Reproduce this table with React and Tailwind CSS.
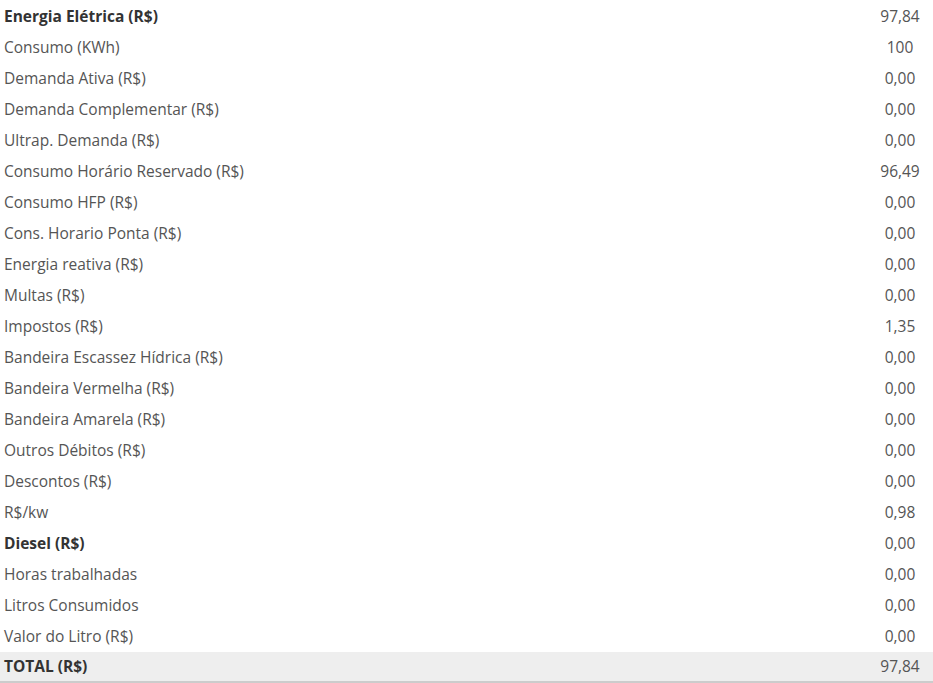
import React from 'react';

const rows = [
  { label: 'Energia Elétrica (R$)', value: '97,84', bold: true },
  { label: 'Consumo (KWh)', value: '100' },
  { label: 'Demanda Ativa (R$)', value: '0,00' },
  { label: 'Demanda Complementar (R$)', value: '0,00' },
  { label: 'Ultrap. Demanda (R$)', value: '0,00' },
  { label: 'Consumo Horário Reservado (R$)', value: '96,49' },
  { label: 'Consumo HFP (R$)', value: '0,00' },
  { label: 'Cons. Horario Ponta (R$)', value: '0,00' },
  { label: 'Energia reativa (R$)', value: '0,00' },
  { label: 'Multas (R$)', value: '0,00' },
  { label: 'Impostos (R$)', value: '1,35' },
  { label: 'Bandeira Escassez Hídrica (R$)', value: '0,00' },
  { label: 'Bandeira Vermelha (R$)', value: '0,00' },
  { label: 'Bandeira Amarela (R$)', value: '0,00' },
  { label: 'Outros Débitos (R$)', value: '0,00' },
  { label: 'Descontos (R$)', value: '0,00' },
  { label: 'R$/kw', value: '0,98' },
  { label: 'Diesel (R$)', value: '0,00', bold: true },
  { label: 'Horas trabalhadas', value: '0,00' },
  { label: 'Litros Consumidos', value: '0,00' },
  { label: 'Valor do Litro (R$)', value: '0,00' },
];

export default function App() {
  return (
    <div className="w-[933px] h-[683px] bg-white pt-[1px] text-[15.5px] text-[#555] font-['Open_Sans',sans-serif] overflow-hidden">
      {rows.map((r, i) => (
        <div key={i} className="flex items-center h-[31px]">
          <span className={`flex-1 pl-[4px] ${r.bold ? 'font-bold text-[#333]' : ''}`}>{r.label}</span>
          <span className="w-[62px] mr-[2px] text-center">{r.value}</span>
        </div>
      ))}
      <div className="flex items-center h-[31px] bg-[#eeeeee] border-b-2 border-[#cccccc]">
        <span className="flex-1 pl-[4px] font-bold text-[#333]">TOTAL (R$)</span>
        <span className="w-[62px] mr-[2px] text-center">97,84</span>
      </div>
    </div>
  );
}
